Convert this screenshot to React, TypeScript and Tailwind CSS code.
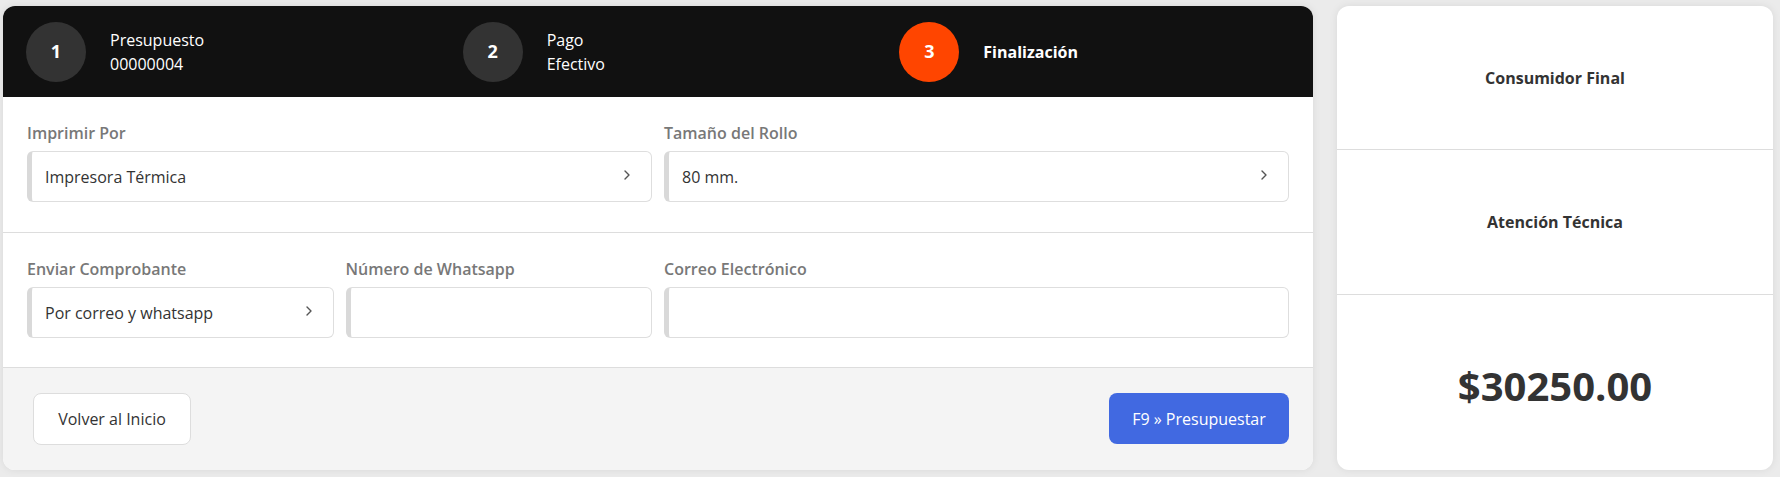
import React from "react";

const font = { fontFamily: '"Segoe UI", "Open Sans", "Noto Sans", sans-serif' };

const Chevron = () => (
  <svg width="8" height="12" viewBox="0 0 8 12" className="shrink-0 -mt-[4px]">
    <path d="M2 2l4 4-4 4" fill="none" stroke="#555" strokeWidth="1.4" strokeLinecap="round" strokeLinejoin="round" />
  </svg>
);

const Step = ({ n, title, sub, active }: { n: number; title: string; sub?: string; active?: boolean }) => (
  <div className="flex items-center gap-6 px-[23px]">
    <div
      className={`w-[60px] h-[60px] rounded-full flex items-center justify-center text-white font-bold text-[18px] ${
        active ? "bg-[#ff4500]" : "bg-[#333333]"
      }`}
    >
      {n}
    </div>
    <div className="text-white text-[16px] leading-6">
      {sub ? (
        <>
          <div>{title}</div>
          <div>{sub}</div>
        </>
      ) : (
        <div className="font-bold">{title}</div>
      )}
    </div>
  </div>
);

const Field = ({ label, value, select }: { label: string; value?: string; select?: boolean }) => (
  <div className="flex flex-col">
    <div className="text-[16px] leading-6 font-semibold text-[#787878] mb-[6px]">{label}</div>
    <div className="h-[51px] rounded-[6px] border border-[#dedede] border-l-[5px] border-l-[#d9d9d9] bg-white flex items-center justify-between pl-[13px] pr-[20px]">
      <span className="text-[16px] text-[#333]">{value}</span>
      {select && <Chevron />}
    </div>
  </div>
);

export default function App() {
  return (
    <div style={font} className="w-[1780px] h-[477px] bg-[#ebebeb] flex gap-[24px] pt-[6px] pl-[3px] pr-[7px] pb-[7px]">
      {/* Left card */}
      <div className="w-[1310px] rounded-[12px] overflow-hidden bg-white shadow-[0_0_8px_rgba(0,0,0,0.08)] flex flex-col">
        <div className="h-[91px] bg-[#111111] grid grid-cols-3 items-center">
          <Step n={1} title="Presupuesto" sub="00000004" />
          <Step n={2} title="Pago" sub="Efectivo" />
          <Step n={3} title="Finalización" active />
        </div>

        <div className="px-[24px] pt-[24px] pb-[30px] border-b border-[#dddddd] grid grid-cols-2 gap-[12px]">
          <Field label="Imprimir Por" value="Impresora Térmica" select />
          <Field label="Tamaño del Rollo" value="80 mm." select />
        </div>

        <div className="px-[24px] pt-[24px] pb-[29px] border-b border-[#dddddd] grid grid-cols-4 gap-[12px]">
          <Field label="Enviar Comprobante" value="Por correo y whatsapp" select />
          <Field label="Número de Whatsapp" />
          <div className="col-span-2">
            <Field label="Correo Electrónico" />
          </div>
        </div>

        <div className="flex-1 bg-[#f4f4f4] flex items-start justify-between pl-[30px] pr-[24px] pt-[25px]">
          <button className="h-[52px] w-[158px] bg-white border border-[#dddddd] rounded-[8px] text-[16px] text-[#333]">
            Volver al Inicio
          </button>
          <button className="h-[51px] w-[180px] bg-[#4169e1] rounded-[8px] text-[16px] text-white">
            F9 » Presupuestar
          </button>
        </div>
      </div>

      {/* Right card */}
      <div className="flex-1 rounded-[12px] overflow-hidden bg-white shadow-[0_0_8px_rgba(0,0,0,0.08)] flex flex-col">
        <div className="h-[144px] border-b border-[#dddddd] flex items-center justify-center">
          <span className="text-[16px] font-bold text-[#333]">Consumidor Final</span>
        </div>
        <div className="h-[145px] border-b border-[#dddddd] flex items-center justify-center">
          <span className="text-[16px] font-bold text-[#333]">Atención Técnica</span>
        </div>
        <div className="flex-1 flex items-center justify-center pt-[6px]">
          <span className="text-[40px] font-bold text-[#333]">$30250.00</span>
        </div>
      </div>
    </div>
  );
}
